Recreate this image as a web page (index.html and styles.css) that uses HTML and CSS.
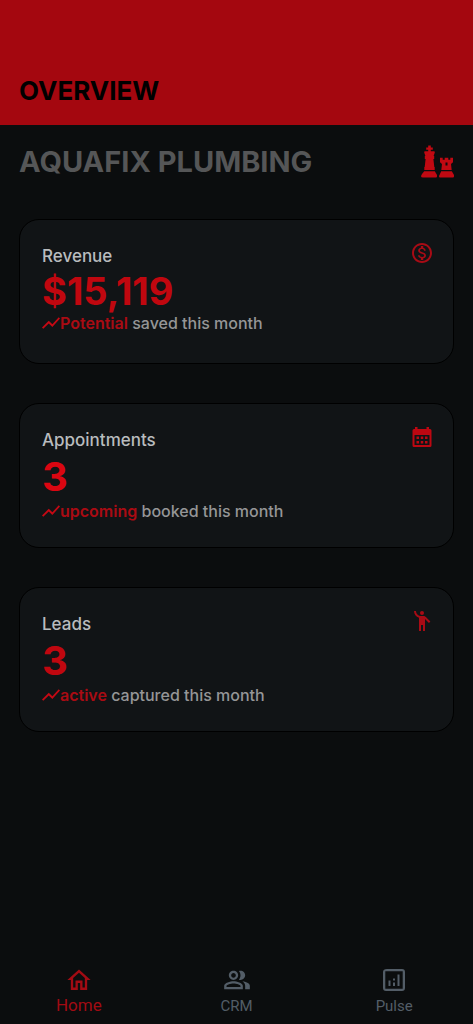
FILE: index.html
```html
<!DOCTYPE html>
<html lang="en">
<head>
<meta charset="utf-8">
<meta name="viewport" content="width=device-width, initial-scale=1">
<title>Overview</title>
<link rel="stylesheet" href="styles.css">
</head>
<body>
<svg class="defs" aria-hidden="true">
  <symbol id="trend" viewBox="2 2 20 20"><path d="M3.400 18.500 2 17l7.500-7.500 4 4 7.100-8L22 6.900l-8.500 9.600-4-4z"/></symbol>
</svg>
<header class="appbar"><h1 class="appbar-title">OVERVIEW</h1></header>
<main class="content">
  <div class="company">
    <h2 class="company-name">AQUAFIX PLUMBING</h2>
    <svg class="company-logo" viewBox="0 0 34 34" aria-hidden="true">
      <path d="M8.200.5h2.600v1.900h2v2.300h-2v1.600h3q1.300 0 1 1.300l-1.200 3.400h.6v3h-.8l.9 8h.4v3H4.300v-3h.4l.9-8h-.8v-3h.6L4.200 7.600q-.3-1.300 1-1.300h3V4.700h-2V2.400h2z"/>
      <path d="M4.200 26.300h10.600l2.200 3.700v1.500q0 1-1 1H3q-2 0-2-1.500l1-2z"/>
      <path fill-rule="evenodd" d="M20 12.700h2.700v2h2v-2h3.600v2h2v-2H33v4.600l-2 1.700.7 6h-10.400l.7-6-2-1.700zM25.500 17.500v3h2v-3z"/>
      <path d="M21.200 26.300h10.600l2.200 3.700v1.500q0 1-1 1H20q-1 0-1-1.500l1-2z"/>
    </svg>
  </div>
  <section class="card">
    <div class="card-body">
      <h3 class="label">Revenue</h3>
      <p class="value value-money">$15,119</p>
      <p class="note"><svg class="trend" aria-hidden="true"><use href="#trend"/></svg><strong class="accent">Potential</strong>&nbsp;saved this month</p>
    </div>
    <svg class="card-icon" viewBox="0 0 24 24" aria-hidden="true"><path d="M12 2C6.480 2 2 6.480 2 12s4.480 10 10 10 10-4.480 10-10S17.520 2 12 2zm0 18c-4.410 0-8-3.590-8-8s3.590-8 8-8 8 3.590 8 8-3.590 8-8 8zm.31-8.860c-1.770-.45-2.340-.94-2.340-1.670 0-.84.79-1.430 2.100-1.430 1.380 0 1.900.66 1.940 1.640h1.710c-.05-1.340-.87-2.570-2.490-2.970V5H10.900v1.690c-1.510.32-2.720 1.300-2.720 2.810 0 1.790 1.490 2.690 3.660 3.210 1.950.46 2.340 1.150 2.340 1.870 0 .53-.39 1.390-2.100 1.390-1.600 0-2.230-.72-2.320-1.640H8.040c.1 1.700 1.360 2.660 2.860 2.970V19h2.340v-1.670c1.520-.29 2.720-1.160 2.730-2.770-.01-2.200-1.900-2.960-3.660-3.420z"/></svg>
  </section>
  <section class="card">
    <div class="card-body">
      <h3 class="label">Appointments</h3>
      <p class="value value-bright">3</p>
      <p class="note"><svg class="trend" aria-hidden="true"><use href="#trend"/></svg><strong class="accent">upcoming</strong>&nbsp;booked this month</p>
    </div>
    <svg class="card-icon icon-strong" viewBox="0 0 24 24" aria-hidden="true"><path fill-rule="evenodd" d="M5 4V2h2.500v2h9V2H19v2h1q1.500 0 1.500 1.500v15Q21.500 22 20 22H4q-1.500 0-1.500-1.500v-15Q2.500 4 4 4zM4.500 10v10h15V10z"/><path d="M6.500 11.500h2.500V14H6.500zm4.250 0h2.500V14h-2.500zm4.250 0h2.500V14H15zM6.500 16h2.500v2.500H6.500zm4.250 0h2.500v2.500h-2.500zM15 16h2.500v2.500H15z"/></svg>
  </section>
  <section class="card">
    <div class="card-body">
      <h3 class="label">Leads</h3>
      <p class="value">3</p>
      <p class="note"><svg class="trend" aria-hidden="true"><use href="#trend"/></svg><strong class="accent">active</strong>&nbsp;captured this month</p>
    </div>
    <svg class="card-icon" viewBox="0 0 24 24" aria-hidden="true"><circle cx="12" cy="4" r="2"/><path d="M15.890 8.110C15.500 7.720 14.830 7 13.530 7h-2.540C8.240 6.990 6 4.750 6 2H4c0 3.160 2.110 5.840 5 6.710V22h2v-6h2v6h2V10.050L18.950 14l1.410-1.410z"/></svg>
  </section>
</main>
<nav class="tabs">
  <a class="tab tab-active" href="#home" aria-current="page">
    <svg class="tab-icon" viewBox="0 0 24 24" aria-hidden="true"><path d="m12 5.690 5 4.500V18.500h-2v-6H9v6H7v-8.310zM12 3 2 12h3v8.500h6v-6h2v6h6V12h3z"/></svg>
    <span>Home</span>
  </a>
  <a class="tab" href="#crm">
    <svg class="tab-icon" viewBox="0 0 24 24" aria-hidden="true"><path d="M16.670 13.130C18.040 14.060 19 15.320 19 17v3h4v-3c0-2.180-3.570-3.470-6.330-3.870zM15 12c2.210 0 4-1.790 4-4s-1.790-4-4-4c-.47 0-.91.1-1.330.24C14.500 5.270 15 6.580 15 8s-.5 2.730-1.330 3.760c.42.140.86.240 1.330.24zM9 12c2.210 0 4-1.790 4-4s-1.790-4-4-4-4 1.790-4 4 1.790 4 4 4zm0-6c1.100 0 2 .9 2 2s-.9 2-2 2-2-.9-2-2 .9-2 2-2zm0 7c-2.670 0-8 1.340-8 4v3h16v-3c0-2.660-5.330-4-8-4zm6 5H3v-.99C3.200 16.290 6.300 15 9 15s5.800 1.290 6 2z"/></svg>
    <span>CRM</span>
  </a>
  <a class="tab" href="#pulse">
    <svg class="tab-icon" viewBox="-2 -2 28 28" aria-hidden="true"><path d="M19 1H5Q1 1 1 4v16q0 3 3 3h16q3 0 3-3V4q0-3-3-3zM20.700 20.700H3.300V3.300h17.400zM6.500 12.500h2V18h-2zm9-6h2V18h-2zm-4.500 8h2V18h-2zm0-4h2v2h-2z" fill-rule="evenodd"/></svg>
    <span>Pulse</span>
  </a>
</nav>
</body>
</html>
```
FILE: styles.css
```css
* { box-sizing: border-box; }

body {
  margin: 0;
  min-height: 100vh;
  display: flex;
  flex-direction: column;
  background: #0b0d0e;
  font-family: Inter, "Liberation Sans", sans-serif;
}

h1, h2, h3, p { margin: 0; }
svg { fill: currentColor; flex-shrink: 0; }
.defs { display: none; }

.appbar {
  padding: 75px 19px 18px;
  background: #a4070f;
}

.appbar-title {
  color: #000;
  font-size: 26px;
  line-height: 32px;
  font-weight: 700;
}

.content {
  flex: 1;
  display: flex;
  flex-direction: column;
  gap: 39px;
  padding: 19px;
}

.company {
  display: flex;
  justify-content: space-between;
  align-items: center;
  height: 36px;
}

.company-name {
  color: #555657;
  font-size: 29px;
  line-height: 36px;
  font-weight: 700;
}

.company-logo {
  width: 34px;
  height: 34px;
  color: #c00912;
}

.card {
  display: flex;
  justify-content: space-between;
  min-height: 145px;
  padding: 21px 19px 20px 22px;
  border: 1px solid #000;
  border-radius: 20px;
  background: #111416;
}

.label {
  color: #b9bcbe;
  font-size: 17px;
  line-height: 30px;
  font-weight: 500;
}

.value {
  color: #c0070f;
  font-size: 40px;
  line-height: 44px;
  font-weight: 700;
}

.value-money {
  font-size: 38px;
  line-height: 40px;
}

.value-bright { color: #da0611; }

.note {
  display: flex;
  align-items: center;
  color: #959697;
  font-size: 16px;
  line-height: 24px;
  font-weight: 500;
}

.trend {
  width: 18px;
  height: 18px;
  color: #c50914;
}

.accent {
  color: #aa0b13;
  font-weight: 600;
}

.card-icon {
  width: 24px;
  height: 24px;
  color: #a80b15;
}

.icon-strong { color: #bd0711; }

.tabs {
  display: flex;
  padding: 4px 0 8px;
}

.tab {
  flex: 1;
  display: flex;
  flex-direction: column;
  align-items: center;
  gap: 2px;
  color: #535d67;
  font-family: Roboto, sans-serif;
  font-size: 15px;
  line-height: 20px;
  text-decoration: none;
}

.tab-active {
  color: #a10b13;
  font-size: 17px;
  line-height: 18px;
}

.tab-icon {
  width: 28px;
  height: 28px;
}
```
